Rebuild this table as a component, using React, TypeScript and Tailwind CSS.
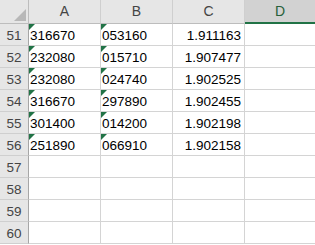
import React from "react";

const rows: { n: number; a?: string; b?: string; c?: string }[] = [
  { n: 51, a: "316670", b: "053160", c: "1.911163" },
  { n: 52, a: "232080", b: "015710", c: "1.907477" },
  { n: 53, a: "232080", b: "024740", c: "1.902525" },
  { n: 54, a: "316670", b: "297890", c: "1.902455" },
  { n: 55, a: "301400", b: "014200", c: "1.902198" },
  { n: 56, a: "251890", b: "066910", c: "1.902158" },
  { n: 57 },
  { n: 58 },
  { n: 59 },
  { n: 60 },
];

const font = { fontFamily: '"Liberation Sans", Arial, sans-serif' };

function Flag() {
  return (
    <div className="absolute left-0 top-0 w-[6px] h-[6px] bg-[#217346] [clip-path:polygon(0_0,100%_0,0_100%)]" />
  );
}

export default function App() {
  return (
    <div className="w-[315px] h-[245px] bg-white overflow-hidden" style={font}>
      <div className="grid grid-cols-[29px_72px_72px_72px_1fr]">
        {/* header row */}
        <div className="relative h-[24px] bg-[#e6e6e6] border-r border-b border-[#bdbdbd]">
          <div className="absolute right-[2px] bottom-[2px] w-[12px] h-[12px] bg-[#b8b8b8] [clip-path:polygon(100%_0,100%_100%,0_100%)]" />
        </div>
        {["A", "B", "C"].map((l) => (
          <div
            key={l}
            className="h-[24px] bg-[#e6e6e6] border-r border-b border-r-[#cfcfcf] border-b-[#bdbdbd] flex items-center justify-center text-[14px] text-[#444444]"
          >
            {l}
          </div>
        ))}
        <div className="h-[24px] bg-[#d2d2d2] border-b-2 border-[#217346] flex items-center justify-center text-[14px] text-[#26603a] pt-[1px]">
          D
        </div>

        {rows.map((r) => (
          <React.Fragment key={r.n}>
            <div className="h-[22px] bg-[#e6e6e6] border-r border-b border-r-[#a6a6a6] border-b-[#cfcfcf] flex items-end justify-center pb-[3px] text-[13.5px] leading-none text-[#444444]">
              {r.n}
            </div>
            <div className="relative h-[22px] border-r border-b border-[#d4d4d4] flex items-end pl-[1px] pb-[3px] text-[13.5px] leading-none text-black">
              {r.a && <Flag />}
              {r.a}
            </div>
            <div className="relative h-[22px] border-r border-b border-[#d4d4d4] flex items-end pl-[1px] pb-[3px] text-[13.5px] leading-none text-black">
              {r.b && <Flag />}
              {r.b}
            </div>
            <div className="h-[22px] border-r border-b border-[#d4d4d4] flex items-end justify-end pr-[3px] pb-[3px] text-[13.5px] leading-none text-black">
              {r.c}
            </div>
            <div className="h-[22px] border-b border-[#d4d4d4]" />
          </React.Fragment>
        ))}
      </div>
    </div>
  );
}
